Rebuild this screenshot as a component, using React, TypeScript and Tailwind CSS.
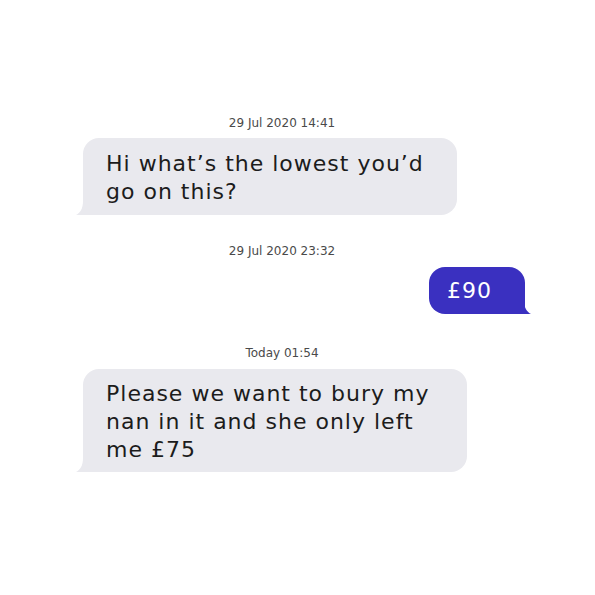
const Stamp = ({ text }: { text: string }) => (
  <div className="flex justify-center pr-[44px]">
    <p className="text-[12px] leading-[16px] text-[#4a4a4a]">{text}</p>
  </div>
)

const TailLeft = () => (
  <svg className="absolute left-[-7px] bottom-0" width="10" height="14" viewBox="0 0 10 14">
    <path d="M7 0 C7 8 4 12 0 14 L10 14 L10 0 Z" fill="#e9e9ee" />
  </svg>
)

const TailRight = () => (
  <svg className="absolute right-[-6px] bottom-0" width="10" height="14" viewBox="0 0 10 14">
    <path d="M3 0 C3 8 6 12 10 14 L0 14 L0 0 Z" fill="#3a30c0" />
  </svg>
)

const App = () => {
  return (
    <div className="w-[595px] h-[595px] bg-white" style={{ fontFamily: '"DejaVu Sans", sans-serif' }}>
      <div className="flex flex-col ml-[83px] w-[442px] pt-[115px]">
        <Stamp text="29 Jul 2020 14:41" />

        <div className="relative mt-[7px] w-[374px] rounded-[16px] rounded-bl-none bg-[#e9e9ee] pl-[23px] pt-[12px] pb-[9px]">
          <p className="text-[22px] leading-[28px] tracking-[1px] text-[#1c1c1c] whitespace-nowrap">
            Hi what’s the lowest you’d
            <br />
            go on this?
          </p>
          <TailLeft />
        </div>

        <div className="mt-[28px]">
          <Stamp text="29 Jul 2020 23:32" />
        </div>

        <div className="flex justify-end mt-[8px]">
          <div className="relative w-[96px] rounded-[16px] rounded-br-none bg-[#3a30c0] pl-[18px] pt-[10px] pb-[9px]">
            <p className="text-[22px] leading-[28px] tracking-[1px] text-white">£90</p>
            <TailRight />
          </div>
        </div>

        <div className="mt-[31px]">
          <Stamp text="Today 01:54" />
        </div>

        <div className="relative mt-[8px] w-[384px] rounded-[16px] rounded-bl-none bg-[#e9e9ee] pl-[23px] pt-[11px] pb-[8px]">
          <p className="text-[22px] leading-[28px] tracking-[1px] text-[#1c1c1c] whitespace-nowrap">
            Please we want to bury my
            <br />
            nan in it and she only left
            <br />
            me £75
          </p>
          <TailLeft />
        </div>
      </div>
    </div>
  )
}

export default App
